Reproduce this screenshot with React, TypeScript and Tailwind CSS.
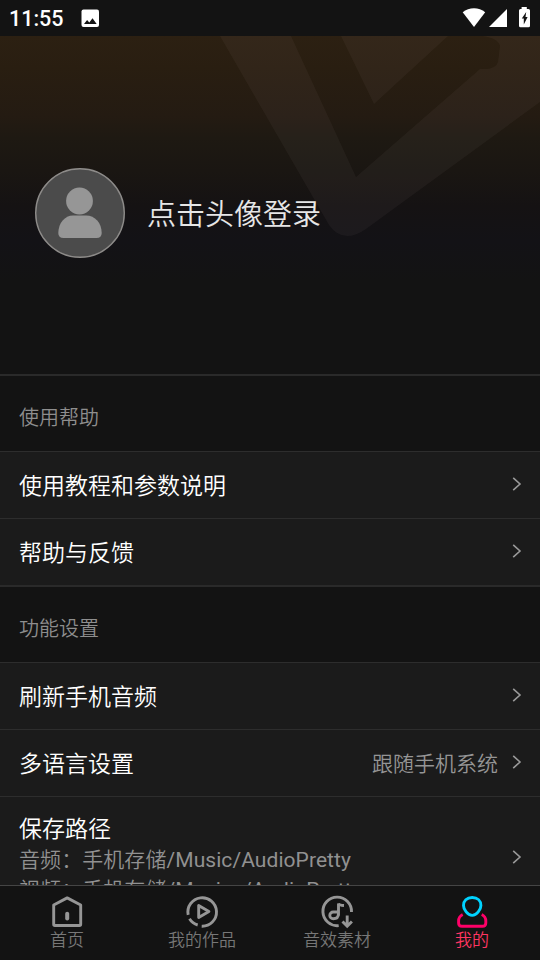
import type { ReactNode } from 'react'

interface RowProps {
  title: string
  value?: string
}

interface TabProps {
  label: string
  active?: boolean
  children: ReactNode
}

function StatusBar() {
  return (
    <div className="flex h-9 shrink-0 items-center bg-[#131313] text-white">
      <span className="ml-[9px] w-[72px] pt-[2px] text-[21.5px] leading-none font-medium">11:55</span>
      <svg className="h-[18px] w-[18px]" viewBox="0 0 18 18">
        <rect x=".5" y=".5" width="17.5" height="17.5" rx="2" fill="#fff" />
        <path d="M3 15 6.1 10.9 8.3 13.5 11.5 9.3 15.7 15Z" fill="#131313" />
      </svg>
      <svg className="ml-auto h-9 w-[80px]" viewBox="460 0 80 36" fill="#fff">
        <path d="M462.7 12.3C469 7 479 7 485.2 12.3L474 27Z" />
        <path d="M489 27 507 9V27Z" />
        <path d="M521.6 7h5.2v2H528.5q1.5 0 1.5 1.5v15.2q0 1.5-1.5 1.5h-8q-1.5 0-1.5-1.5V10.5q0-1.5 1.5-1.5h1.1Z" />
        <path d="M526.2 12 521.8 18.6h2V24.4l3.8-7.3h-2.1Z" fill="#131313" />
      </svg>
    </div>
  )
}

function ProfileHeader() {
  return (
    <div className="relative flex h-[340px] shrink-0 items-start border-b-2 border-[#2a2a2a] bg-[linear-gradient(180deg,#2c2012_0px,#291e11_32px,#241b12_80px,#1e1912_102px,#1a1612_135px,#151213_170px,#131216_205px,#131313_245px)]">
      {/* watermark */}
      <svg className="absolute inset-0 h-[338px] w-full" viewBox="0 36 540 338">
        <path
          d="M220 36H291L356 177 480 69Q496 70 498 62L500 46Q498 38 482 36H540V102L366 229Q343 245 329 225Z M341 36H448L374 104Z"
          fill="#ffdcdc"
          fillOpacity=".038"
        />
      </svg>
      <div className="relative mt-[132px] ml-[35px] flex items-center">
        <svg className="h-[90px] w-[90px]" viewBox="0 0 90 90">
          <circle cx="45" cy="45" r="44.3" fill="#4b4b4b" stroke="#8d8b89" strokeWidth="1.4" />
          <circle cx="44.5" cy="33" r="13.4" fill="#969696" />
          <path d="M38 47.5H51C60 47.5 66.7 55 66.7 65Q66.7 70 61.5 70H28.5Q23.3 70 23.3 65C23.3 55 30 47.5 38 47.5Z" fill="#969696" />
        </svg>
        <span className="ml-[22px] pt-[4px] text-[29px] leading-none font-[350] text-[#e6e6e6]">点击头像登录</span>
      </div>
    </div>
  )
}

function Chevron() {
  return (
    <svg className="mb-[2px] h-4 w-[10px] shrink-0" viewBox="0 0 10 16" fill="none" stroke="#999" strokeWidth="1.6">
      <path d="M1.2 1.8 8 8 1.2 14.2" />
    </svg>
  )
}

function SectionTitle({ children }: { children: ReactNode }) {
  return (
    <div className="flex h-[75px] shrink-0 items-center pt-[8px] pl-[19px] text-[20px] leading-none font-[350] text-[#8e8e8e]">
      {children}
    </div>
  )
}

function Row({ title, value }: RowProps) {
  return (
    <div className="flex h-[67px] shrink-0 items-center border-t border-[#2d2d2d] bg-[#1b1b1b] pr-[18px] pl-[19px]">
      <span className="flex-1 pt-[3px] text-[23px] leading-none font-[350] text-white">{title}</span>
      {value && <span className="mr-[14px] pt-[3px] text-[21px] leading-none font-[350] text-[#959595]">{value}</span>}
      <Chevron />
    </div>
  )
}

function Tab({ label, active, children }: TabProps) {
  return (
    <div className="flex flex-1 flex-col items-center pt-[9px] pr-px">
      <svg className="h-[34px] w-[34px]" viewBox="-0.2 0 34 34" fill="none" stroke="#969696" strokeWidth="2.9">
        {children}
      </svg>
      <span
        className={
          active
            ? 'mt-[3px] text-[17px] leading-none font-[350] text-[#ff3662]'
            : 'mt-[3px] text-[17px] leading-none font-[350] text-[#777]'
        }
      >
        {label}
      </span>
    </div>
  )
}

export default function App() {
  return (
    <div className="flex h-[960px] w-[540px] flex-col overflow-hidden bg-[#131313] font-[Roboto,'Noto_Sans_CJK_SC',sans-serif]">
      <StatusBar />
      <div className="flex min-h-0 flex-1 flex-col overflow-hidden">
        <ProfileHeader />
        <SectionTitle>使用帮助</SectionTitle>
        <Row title="使用教程和参数说明" />
        <Row title="帮助与反馈" />
        <div className="h-[2px] shrink-0 bg-[#2a2a2a]" />
        <SectionTitle>功能设置</SectionTitle>
        <Row title="刷新手机音频" />
        <Row title="多语言设置" value="跟随手机系统" />
        <div className="flex h-[122px] shrink-0 items-center border-t border-[#2d2d2d] bg-[#1b1b1b] pr-[18px] pl-[19px]">
          <div className="flex-1 pt-[5px] font-[350]">
            <p className="text-[23px] leading-[30px] text-white">保存路径</p>
            <p className="text-[21px] leading-[30px] tracking-[0.07px] text-[#919191]">
              音频：手机存储<span className="font-normal">/Music/AudioPretty</span>
            </p>
            <p className="text-[21px] leading-[30px] tracking-[0.07px] text-[#919191]">
              视频：手机存储<span className="font-normal">/Movies/AudioPretty</span>
            </p>
          </div>
          <Chevron />
        </div>
      </div>

      <nav className="flex h-[75px] shrink-0 border-t border-[#454545] bg-[#131313]">
        <Tab label="首页">
          <path d="M3.5 10 17 2.9 30.5 10V29.3Q30.5 30.5 29.3 30.5H4.7Q3.5 30.5 3.5 29.3Z" strokeLinejoin="round" />
          <path d="M17 18.8v4.6" strokeWidth="4" strokeLinecap="round" />
        </Tab>
        <Tab label="我的作品">
          <path d="M3 19.9A14.3 14.3 0 1 1 16.5 31.3" />
          <path d="M4.3 23.8A14.3 14.3 0 0 0 12.5 30" />
          <path d="M13.5 10.6V22.6L23.7 16.6Z" strokeLinejoin="round" />
        </Tab>
        <Tab label="音效素材">
          <path d="M18.5 30.6A14.3 14.3 0 1 1 31.3 17" />
          <path d="M18.3 20.5V8.5Q19 10.3 23.8 10.5M18.3 17H13A3.4 3.4 0 0 0 13 23.8Q18.3 23.8 18.3 18.5" />
          <path d="M27 20.5V31M22.3 26.5 27 31.2 31.7 26.5" />
        </Tab>
        <Tab label="我的" active>
          <path d="M17 2.5C22.5 2.5 25.7 6 25.7 10.4 25.7 14.5 21.5 20.4 17 20.4S8.3 14.5 8.3 10.4C8.3 6 11.5 2.5 17 2.5Z" stroke="#00d3ff" />
          <path d="M7.5 19.5Q3.4 21.5 3.4 26V28Q3.4 31.3 6.8 31.3H27.2Q30.6 31.3 30.6 28V26Q30.6 21.5 26.5 19.5" stroke="#ff0068" />
        </Tab>
      </nav>
    </div>
  )
}
